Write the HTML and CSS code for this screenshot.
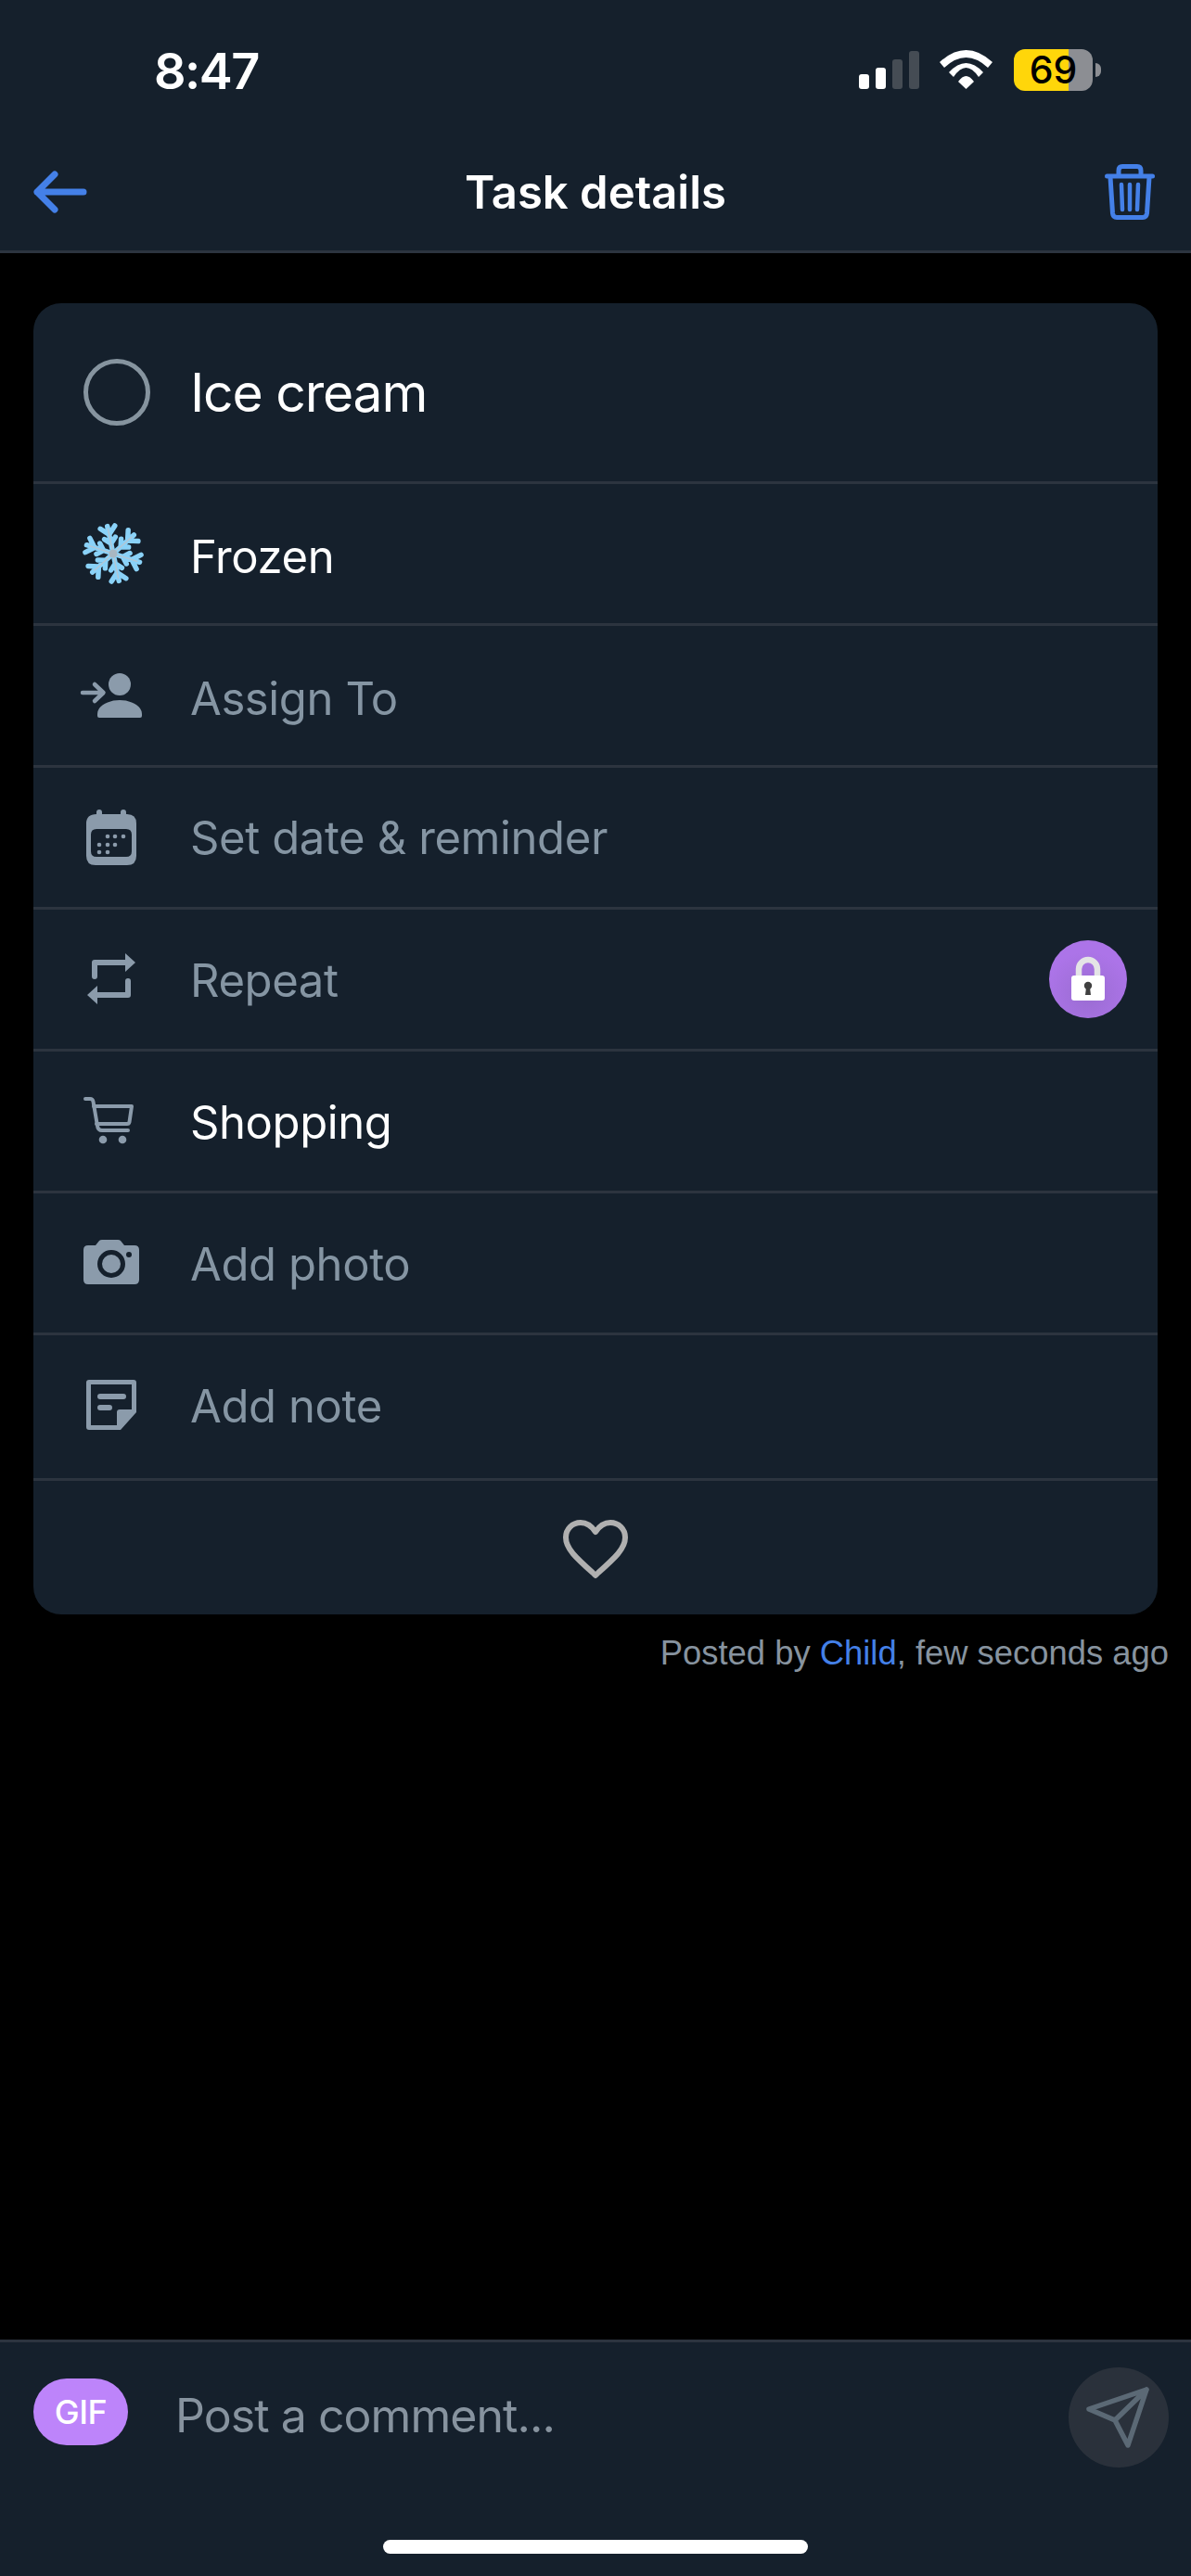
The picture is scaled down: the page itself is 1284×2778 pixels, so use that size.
FILE: index.html
```html
<!DOCTYPE html>
<html lang="en">
<head>
<meta charset="utf-8">
<title>Task details</title>
<link rel="stylesheet" href="styles.css">
</head>
<body>
<div class="app">
  <header class="topbar">
    <div class="status">
      <span class="clock">8:47</span>
      <div class="status-icons">
        <svg class="signal" width="65" height="44" viewBox="0 0 65 44"><rect x="0" y="27" width="11" height="16" rx="3" fill="#fff"/><rect x="18" y="20" width="11" height="23" rx="3" fill="#fff"/><rect x="36" y="11" width="11" height="32" rx="3" fill="#454c54"/><rect x="54" y="2" width="11" height="41" rx="3" fill="#454c54"/></svg>
        <svg class="wifi" width="58" height="44" viewBox="0 0 58 44"><path d="M0 14 Q28.500 -12 57 14 L52 20 Q28.500 -2 5 20Z M10 25 Q28.500 5 47 25 L42 30 Q28.500 10 15 30Z M20 35 Q28.500 23 37 35 L28.500 43Z" fill="#fff"/></svg>
        <div class="battery"><div class="battery-body"><span class="battery-num">69</span></div><div class="battery-tip"></div></div>
      </div>
    </div>
    <div class="navbar">
      <svg class="back" width="58" height="46" viewBox="0 0 58 46"><path d="M23 4 L4 23 L23 42 M4 23 H54" fill="none" stroke="#4480e8" stroke-width="7" stroke-linecap="round" stroke-linejoin="round"/></svg>
      <h1 class="title">Task details</h1>
      <svg class="trash" width="54" height="60" viewBox="0 0 54 60"><g fill="none" stroke="#4480e8" stroke-width="5" stroke-linecap="round" stroke-linejoin="round"><path d="M2.500 13 H51.500"/><path d="M6 14 L8.500 53 Q9 57.500 13 57.500 H41 Q45 57.500 45.500 53 L48 14"/><path d="M15 12 V7 Q15 2.500 19 2.500 H35 Q39 2.500 39 7 V12"/><path d="M18 22 L19 49 M27 22 V49 M36 22 L35 49" stroke-width="4.500"/></g></svg>
    </div>
  </header>

  <main class="content">
    <section class="card">
      <div class="row row-head">
        <span class="check"></span>
        <span class="label head">Ice cream</span>
      </div>
      <div class="row">
        <svg class="ico" width="72" height="72" viewBox="0 0 72 72">
          <g fill="none" stroke-linecap="round" transform="rotate(-12 36 36)">
            <g stroke="#8ad2f8" stroke-width="5.500">
              <path d="M36 36 V6 M36 15 L28 7 M36 15 L44 7 M36 25 L30 19 M36 25 L42 19"/>
              <path d="M36 36 V6 M36 15 L28 7 M36 15 L44 7 M36 25 L30 19 M36 25 L42 19" transform="rotate(60 36 36)"/>
              <path d="M36 36 V6 M36 15 L28 7 M36 15 L44 7 M36 25 L30 19 M36 25 L42 19" transform="rotate(120 36 36)"/>
              <path d="M36 36 V6 M36 15 L28 7 M36 15 L44 7 M36 25 L30 19 M36 25 L42 19" transform="rotate(180 36 36)"/>
              <path d="M36 36 V6 M36 15 L28 7 M36 15 L44 7 M36 25 L30 19 M36 25 L42 19" transform="rotate(240 36 36)"/>
              <path d="M36 36 V6 M36 15 L28 7 M36 15 L44 7 M36 25 L30 19 M36 25 L42 19" transform="rotate(300 36 36)"/>
            </g>
            <g stroke="#b3c6d4" stroke-width="1.500">
              <path d="M36 36 V9"/><path d="M36 36 V9" transform="rotate(60 36 36)"/><path d="M36 36 V9" transform="rotate(120 36 36)"/><path d="M36 36 V9" transform="rotate(180 36 36)"/><path d="M36 36 V9" transform="rotate(240 36 36)"/><path d="M36 36 V9" transform="rotate(300 36 36)"/>
            </g>
          </g>
          <circle cx="36" cy="36" r="4.500" fill="#a9b7c2"/>
        </svg>
        <span class="label on drop4">Frozen</span>
      </div>
      <div class="row">
        <svg class="ico" width="72" height="72" viewBox="0 0 72 72" fill="#8b9bab"><circle cx="43" cy="24" r="12"/><path d="M19 58 V56 C19 47 31 41 43 41 C55 41 67 47 67 56 V58 Q67 60 65 60 H21 Q19 60 19 58Z"/><path d="M3 33 H25 M16 24 L25.500 33 L16 42" fill="none" stroke="#8b9bab" stroke-width="4.500" stroke-linecap="round" stroke-linejoin="round"/></svg>
        <span class="label drop4">Assign To</span>
      </div>
      <div class="row">
        <svg class="ico" width="72" height="72" viewBox="0 0 72 72"><path fill="#8b9bab" fill-rule="evenodd" d="M18 11 V9 a3 3 0 0 1 6 0 V11 H44 V9 a3 3 0 0 1 6 0 V11 H51 Q61 11 61 21 V56 Q61 66 51 66 H17 Q7 66 7 56 V21 Q7 11 18 11Z M18 27 Q12 27 12 33 V51 Q12 57 18 57 H50 Q56 57 56 51 V33 Q56 27 50 27Z"/><g fill="#8b9bab"><circle cx="30" cy="35" r="2.300"/><circle cx="38" cy="35" r="2.300"/><circle cx="47" cy="35" r="2.300"/><circle cx="21" cy="44" r="2.300"/><circle cx="30" cy="44" r="2.300"/><circle cx="38" cy="44" r="2.300"/><circle cx="21" cy="52" r="2.300"/><circle cx="30" cy="52" r="2.300"/></g></svg>
        <span class="label drop1">Set date &amp; reminder</span>
      </div>
      <div class="row row-repeat">
        <svg class="ico" width="72" height="72" viewBox="0 0 72 72" fill="#8b9bab"><path d="M13 33 V18 Q13 15 16 15 H49 V8 L60 18 L49 28 V21 H19 V33 Q19 36 16 36 Q13 36 13 33Z"/><path d="M13 33 V18 Q13 15 16 15 H49 V8 L60 18 L49 28 V21 H19 V33 Q19 36 16 36 Q13 36 13 33Z" transform="rotate(180 34 35.500)"/></svg>
        <span class="label drop2">Repeat</span>
        <div class="lock">
          <svg width="40" height="50" viewBox="0 0 40 50"><path d="M10 24 V14 a10 10 0 0 1 20 0 V24" fill="none" stroke="#e4e4e6" stroke-width="6.500"/><rect x="2" y="21" width="36" height="27" rx="3" fill="#fff"/><circle cx="20" cy="32" r="4.200" fill="#404040"/><path d="M18 34 H22 L23 42 H17Z" fill="#404040"/></svg>
        </div>
      </div>
      <div class="row">
        <svg class="ico" width="72" height="72" viewBox="0 0 72 72"><g fill="none" stroke="#8b9bab" stroke-width="4" stroke-linecap="round" stroke-linejoin="round"><path d="M6 12 H11 Q14 12 14.500 15 L19 41 Q19.500 46 24 46 H52"/><path d="M15 20 H56 L53.500 37 Q53 39 51 39 H18"/></g><circle cx="25" cy="56" r="4.300" fill="#8b9bab"/><circle cx="46" cy="56" r="4.300" fill="#8b9bab"/></svg>
        <span class="label on drop2">Shopping</span>
      </div>
      <div class="row">
        <svg class="ico" width="72" height="72" viewBox="0 0 72 72"><path fill="#8b9bab" d="M4 22 Q4 17 9 17 H17 L21 12 Q22 11 24 11 H41 Q43 11 44 12 L48 17 H59 Q64 17 64 22 V54 Q64 59 59 59 H9 Q4 59 4 54Z"/><circle cx="34" cy="37" r="12.500" fill="none" stroke="#15202c" stroke-width="5"/><circle cx="53" cy="27" r="3" fill="#15202c"/></svg>
        <span class="label drop2">Add photo</span>
      </div>
      <div class="row row-note">
        <svg class="ico" width="72" height="72" viewBox="0 0 72 72"><path fill="#8b9bab" fill-rule="evenodd" d="M10 7 H58 Q61 7 61 10 V42 L44 61 H10 Q7 61 7 58 V10 Q7 7 10 7Z M12 12 V56 H40 V42 Q40 39 43 39 H56 V12Z"/><path d="M22 25 H47 M22 37 H32" stroke="#8b9bab" stroke-width="6" fill="none" stroke-linecap="round"/></svg>
        <span class="label">Add note</span>
      </div>
      <div class="row-like">
        <svg width="72" height="64" viewBox="0 0 72 64"><path d="M36 60 L33 57 C15 41 4 31 4 19 C4 10 11 3 20 3 C27 3 32 7 36 13 C40 7 45 3 52 3 C61 3 68 10 68 19 C68 31 57 41 39 57Z" fill="none" stroke="#b0b0b0" stroke-width="6" stroke-linejoin="round"/></svg>
      </div>
    </section>
    <p class="posted">Posted by <span class="author">Child</span>, few seconds ago</p>
  </main>

  <footer class="composer">
    <div class="composer-row">
      <span class="gif">GIF</span>
      <span class="placeholder">Post a comment...</span>
      <span class="send">
        <svg width="72" height="72" viewBox="0 0 72 72"><path d="M66 6 L4 27 L32 39 L46 66Z M66 6 L32 39" fill="none" stroke="#5b6975" stroke-width="5.500" stroke-linejoin="round" stroke-linecap="round"/></svg>
      </span>
    </div>
    <div class="home"></div>
  </footer>
</div>
</body>
</html>
```
FILE: styles.css
```css
* { box-sizing: border-box; }
html, body { margin: 0; padding: 0; background: #000; }
body { font-family: "Inter", "Liberation Sans", sans-serif; }
.app { width: 1284px; height: 2778px; display: flex; flex-direction: column; background: #000; overflow: hidden; }

.topbar { height: 273px; background: #15202c; border-bottom: 3px solid #2c343f; flex: none; }
.status { height: 150px; display: flex; justify-content: space-between; padding: 45px 97px 0 166px; }
.clock { font-size: 54px; line-height: 64px; font-weight: 600; color: #fff; letter-spacing: -1.500px; }
.status-icons { display: flex; align-items: flex-start; height: 46px; margin-top: 8px; gap: 22px; }
.battery { display: flex; align-items: center; }
.battery-body { width: 85px; height: 45px; border-radius: 12px; display: flex; align-items: center; justify-content: center; background: linear-gradient(90deg, #ffd60a 0 69%, #8c8e93 69% 100%); }
.battery-num { font-size: 41px; line-height: 45px; font-weight: 500; color: #000; }
.battery-tip { width: 6px; height: 15px; margin-left: 3px; background: #8c8e93; border-radius: 0 8px 8px 0; }

.navbar { height: 120px; display: flex; align-items: center; justify-content: space-between; padding: 0 39px 6px 36px; position: relative; }
.title { margin: 0; position: absolute; left: 0; right: 0; top: 28px; text-align: center; font-size: 49px; line-height: 60px; font-weight: 600; color: #fff; }

.content { flex: 1; padding: 54px 0 0 36px; }
.card { width: 1212px; background: #15202c; border-radius: 30px; overflow: hidden; }
.row { height: 153px; display: flex; align-items: center; padding: 0 33px 0 50px; border-top: 3px solid #2c343f; gap: 47px; }
.row-head { height: 192px; border-top: 0; padding-left: 54px; gap: 43px; }
.row-note { height: 157px; }
.row-like { height: 147px; padding-top: 4px; border-top: 3px solid #2c343f; display: flex; align-items: center; justify-content: center; }
.check { width: 72px; height: 72px; border: 5px solid #86949f; border-radius: 50%; flex: none; }
.ico { flex: none; }
.label { font-size: 49px; line-height: 60px; color: #8595a3; font-weight: 400; letter-spacing: -0.400px; }
.label.on { color: #fff; }
.label.head { font-size: 57px; line-height: 70px; color: #fff; letter-spacing: -1.200px; margin-top: 2px; }
.drop1 { margin-top: 2px; }
.drop2 { margin-top: 4px; }
.drop4 { margin-top: 8px; }
.lock { margin-left: auto; width: 84px; height: 84px; border-radius: 50%; background: radial-gradient(circle at 50% 70%, #9a6cd2 0%, #ac74e8 65%); display: flex; align-items: center; justify-content: center; flex: none; }

.posted { margin: 19px 24px 0 0; text-align: right; font-family: "Liberation Sans", sans-serif; font-size: 36.400px; line-height: 46px; color: #87939f; }
.author { color: #4480e8; }

.composer { height: 255px; flex: none; background: #15202c; border-top: 3px solid #2c343f; display: flex; flex-direction: column; }
.composer-row { height: 213px; display: flex; align-items: flex-start; padding: 0 24px 0 36px; }
.gif { width: 102px; height: 72px; margin-top: 39px; border-radius: 36px; background: #bd84fa; color: #fff; font-size: 36px; line-height: 72px; font-weight: 500; letter-spacing: -0.500px; text-align: center; flex: none; }
.placeholder { margin-left: 51px; margin-top: 47px; font-size: 50px; line-height: 64px; color: #87939f; letter-spacing: -0.950px; }
.send { margin-left: auto; margin-top: 27px; width: 108px; height: 108px; border-radius: 50%; background: #2a313b; display: flex; align-items: center; justify-content: center; flex: none; }
.home { width: 458px; height: 15px; border-radius: 8px; background: #fff; margin: 0 auto; }
```
